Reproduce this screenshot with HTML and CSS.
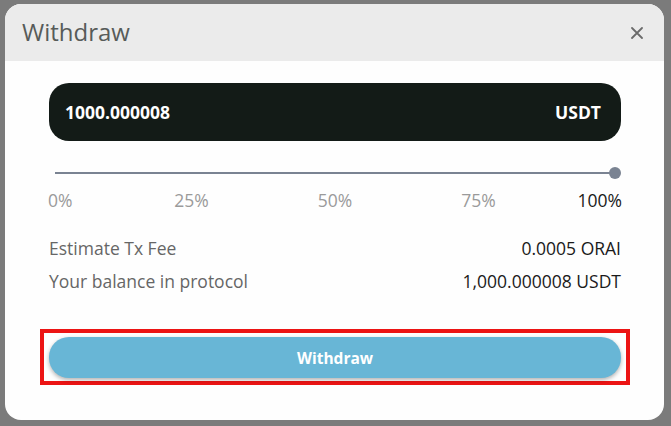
FILE: index.html
```html
<!DOCTYPE html>
<html>
<head>
<meta charset="utf-8">
<link rel="stylesheet" href="styles.css">
</head>
<body>
<div class="modal">
  <div class="modal-header">
    <h2 class="modal-title">Withdraw</h2>
    <button class="close-btn" aria-label="Close">
      <svg width="12" height="12" viewBox="0 0 12 12"><path d="M1 1L11 11M11 1L1 11" stroke="#6b6b6b" stroke-width="1.8" stroke-linecap="round"/></svg>
    </button>
  </div>
  <div class="modal-body">
    <div class="amount-input">
      <span class="amount-value">1000.000008</span>
      <span class="amount-token">USDT</span>
    </div>
    <div class="slider">
      <div class="slider-track">
        <div class="slider-line"></div>
        <div class="slider-thumb"></div>
      </div>
      <div class="slider-marks">
        <span class="mark mark-first">0%</span>
        <span class="mark">25%</span>
        <span class="mark">50%</span>
        <span class="mark">75%</span>
        <span class="mark mark-last active">100%</span>
      </div>
    </div>
    <div class="info">
      <div class="info-row"><span class="info-label">Estimate Tx Fee</span><span class="info-value">0.0005 ORAI</span></div>
      <div class="info-row"><span class="info-label">Your balance in protocol</span><span class="info-value">1,000.000008 USDT</span></div>
    </div>
    <div class="highlight">
      <button class="submit-btn">Withdraw</button>
    </div>
  </div>
</div>
</body>
</html>
```
FILE: styles.css
```css
* { box-sizing: border-box; }
html, body { margin: 0; padding: 0; }
body {
  background: #7b7b7b;
  width: 671px;
  height: 426px;
  overflow: hidden;
  font-family: "Open Sans", "Noto Sans", sans-serif;
  padding: 4px 7px 6px 5px;
}
.modal {
  width: 659px;
  height: 416px;
  background: #fefefe;
  border-radius: 16px;
  overflow: hidden;
  display: flex;
  flex-direction: column;
}
.modal-header {
  height: 57px;
  background: #ebebeb;
  display: flex;
  align-items: center;
  justify-content: space-between;
  padding: 0 21px 0 17px;
}
.modal-title {
  margin: 0;
  font-size: 24px;
  font-weight: 400;
  color: #575b59;
  line-height: 1;
  padding-bottom: 2px;
}
.close-btn {
  border: 0;
  background: none;
  padding: 0;
  width: 12px;
  height: 12px;
  display: flex;
}
.modal-body {
  padding: 22px 43px 0 44px;
  display: flex;
  flex-direction: column;
}
.amount-input {
  height: 58px;
  background: #131b17;
  border-radius: 20px;
  display: flex;
  align-items: center;
  justify-content: space-between;
  padding: 0 20px 0 16px;
  color: #fff;
  font-weight: 700;
  font-size: 17.5px;
}
.slider {
  margin-top: 26px;
}
.slider-track {
  display: flex;
  align-items: center;
  height: 12px;
  padding-left: 6px;
}
.slider-line {
  flex: 1;
  height: 2px;
  background: #7a8392;
}
.slider-thumb {
  width: 12px;
  height: 12px;
  border-radius: 50%;
  background: #7a8392;
  margin-left: -6px;
}
.slider-marks {
  display: grid;
  grid-template-columns: 1fr 2fr 2fr 2fr 1fr;
  margin: 9px -1px 0 -1px;
  font-size: 17.5px;
  line-height: 24px;
  color: #9a9a9a;
}
.mark { text-align: center; white-space: nowrap; }
.mark-first { text-align: left; }
.mark-last { text-align: right; }
.mark.active { color: #1a1a1a; }
.info {
  margin-top: 24px;
  display: flex;
  flex-direction: column;
  gap: 9px;
}
.info-row {
  display: flex;
  justify-content: space-between;
  font-size: 17.5px;
  line-height: 24px;
}
.info-label { color: #666; }
.info-value { color: #1a1a1a; }
.highlight {
  margin: 36px -9px 0;
  border: 4px solid #ec1414;
  padding: 4px 5px 3px;
  display: flex;
  flex-direction: column;
}
.submit-btn {
  height: 41px;
  border: 0;
  border-radius: 20px;
  background: #68b6d6;
  color: #fff;
  font-family: "Open Sans", sans-serif;
  font-weight: 700;
  font-size: 15.5px;
  box-shadow: 0 2px 4px rgba(0,0,0,0.3);
}
```
